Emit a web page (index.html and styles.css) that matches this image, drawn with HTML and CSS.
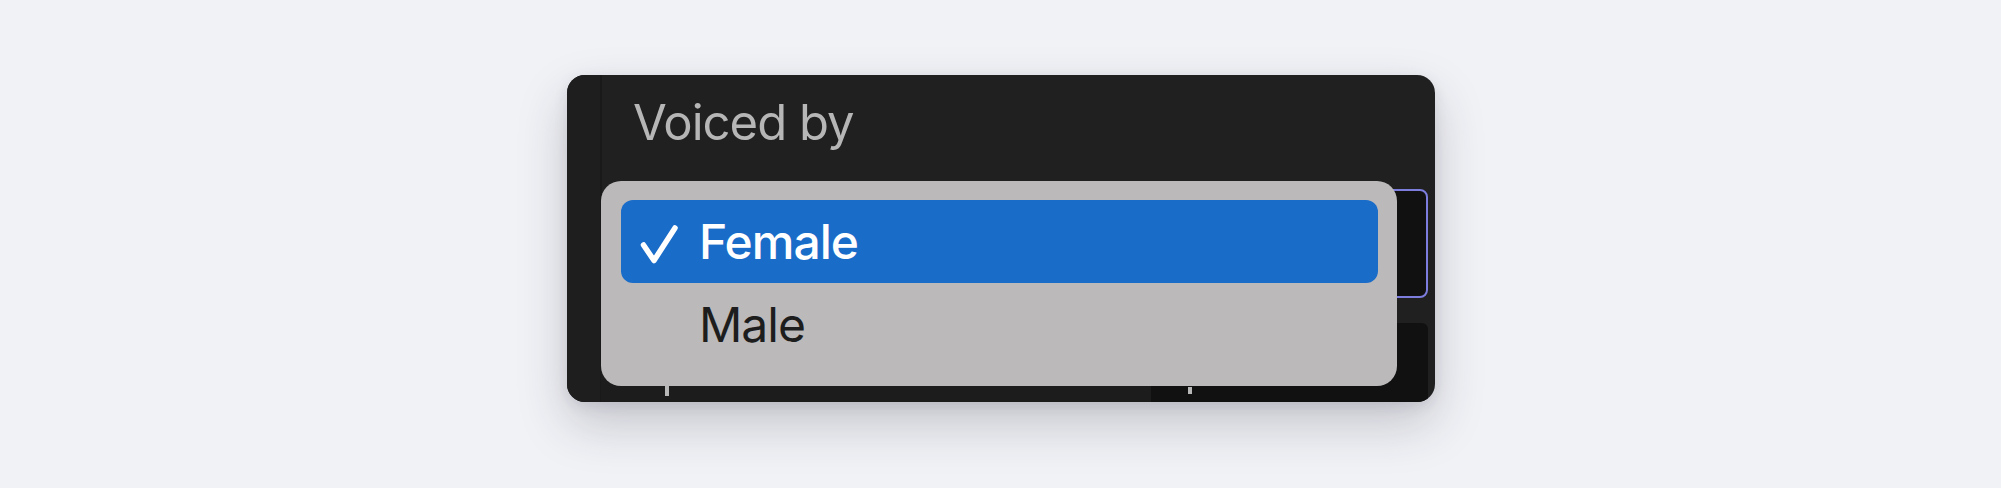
FILE: index.html
```html
<!DOCTYPE html>
<html>
<head>
<meta charset="utf-8">
<link rel="stylesheet" href="styles.css">
</head>
<body>
<div class="stage">
  <div class="panel">
    <div class="strip"></div>
    <div class="content">
      <div class="label">Voiced by</div>
      <div class="select"></div>
      <div class="speed-row">
        <div class="speed"><span class="desc"></span></div>
        <div class="speed-input"><span class="tick"></span></div>
      </div>
    </div>
    <div class="menu">
      <div class="item selected">
        <svg class="check" width="40" height="40" viewBox="0 0 40 40"><path d="M3.5 21 L14 36.5 L35 4" fill="none" stroke="#ffffff" stroke-width="5.5" stroke-linecap="round" stroke-linejoin="round"/></svg>
        <span class="item-text">Female</span>
      </div>
      <div class="item">
        <span class="item-text">Male</span>
      </div>
    </div>
  </div>
</div>
</body>
</html>
```
FILE: styles.css
```css
* { box-sizing: border-box; }
html, body { margin: 0; padding: 0; }
body {
  width: 2001px;
  height: 488px;
  background: #f1f2f6;
  font-family: Inter, "Noto Sans", "Liberation Sans", sans-serif;
  overflow: hidden;
}
.stage {
  display: flex;
  justify-content: center;
  padding-top: 75px;
  padding-left: 1px;
}
.panel {
  position: relative;
  width: 868px;
  height: 327px;
  background: #202020;
  border-radius: 18px;
  overflow: hidden;
  display: flex;
  box-shadow: 0 22px 50px rgba(40, 40, 60, 0.22), 0 4px 14px rgba(40, 40, 60, 0.10);
}
.strip {
  width: 35px;
  flex: none;
  background: #1e1e1e;
  border-right: 2px solid #191919;
}
.content {
  flex: 1;
  display: flex;
  flex-direction: column;
  padding: 18px 7px 0 31px;
}
.content > * { flex-shrink: 0; }
.label {
  font-size: 49px;
  line-height: 60px;
  color: #b6b6b6;
  letter-spacing: -1px;
}
.select {
  margin-top: 36px;
  height: 109px;
  border: 2px solid #7c7ddc;
  border-radius: 8px;
  background: #111111;
}
.speed-row {
  margin-top: 25px;
  display: flex;
  height: 100px;
}
.speed {
  flex: 1;
  background: #1c1c1c;
  margin-left: -32px;
  padding: 62px 0 0 64px;
}
.desc {
  display: block;
  width: 4px;
  height: 11px;
  background: #b8b8b8;
}
.speed-input {
  width: 277px;
  height: 100px;
  background: #111111;
  border-radius: 6px;
  padding: 64px 0 0 37px;
}
.tick {
  display: block;
  width: 4px;
  height: 7px;
  background: #b8b8b8;
}
.menu {
  position: absolute;
  left: 34px;
  top: 106px;
  width: 796px;
  height: 205px;
  background: #bbb9ba;
  border-radius: 20px;
  padding: 19px 19px 0 20px;
  display: flex;
  flex-direction: column;
}
.item {
  height: 83px;
  display: flex;
  align-items: center;
  border-radius: 12px;
  padding-left: 19px;
}
.item.selected {
  background: #1a6cc9;
}
.check {
  flex: none;
  width: 40px;
  height: 40px;
  margin-top: 5px;
}
.item-text {
  font-size: 48px;
  line-height: 60px;
  color: #1d1d1d;
  margin-left: 59px;
  letter-spacing: -1px;
}
.item.selected .item-text {
  color: #ffffff;
  font-weight: 500;
  margin-left: 19px;
}
```
